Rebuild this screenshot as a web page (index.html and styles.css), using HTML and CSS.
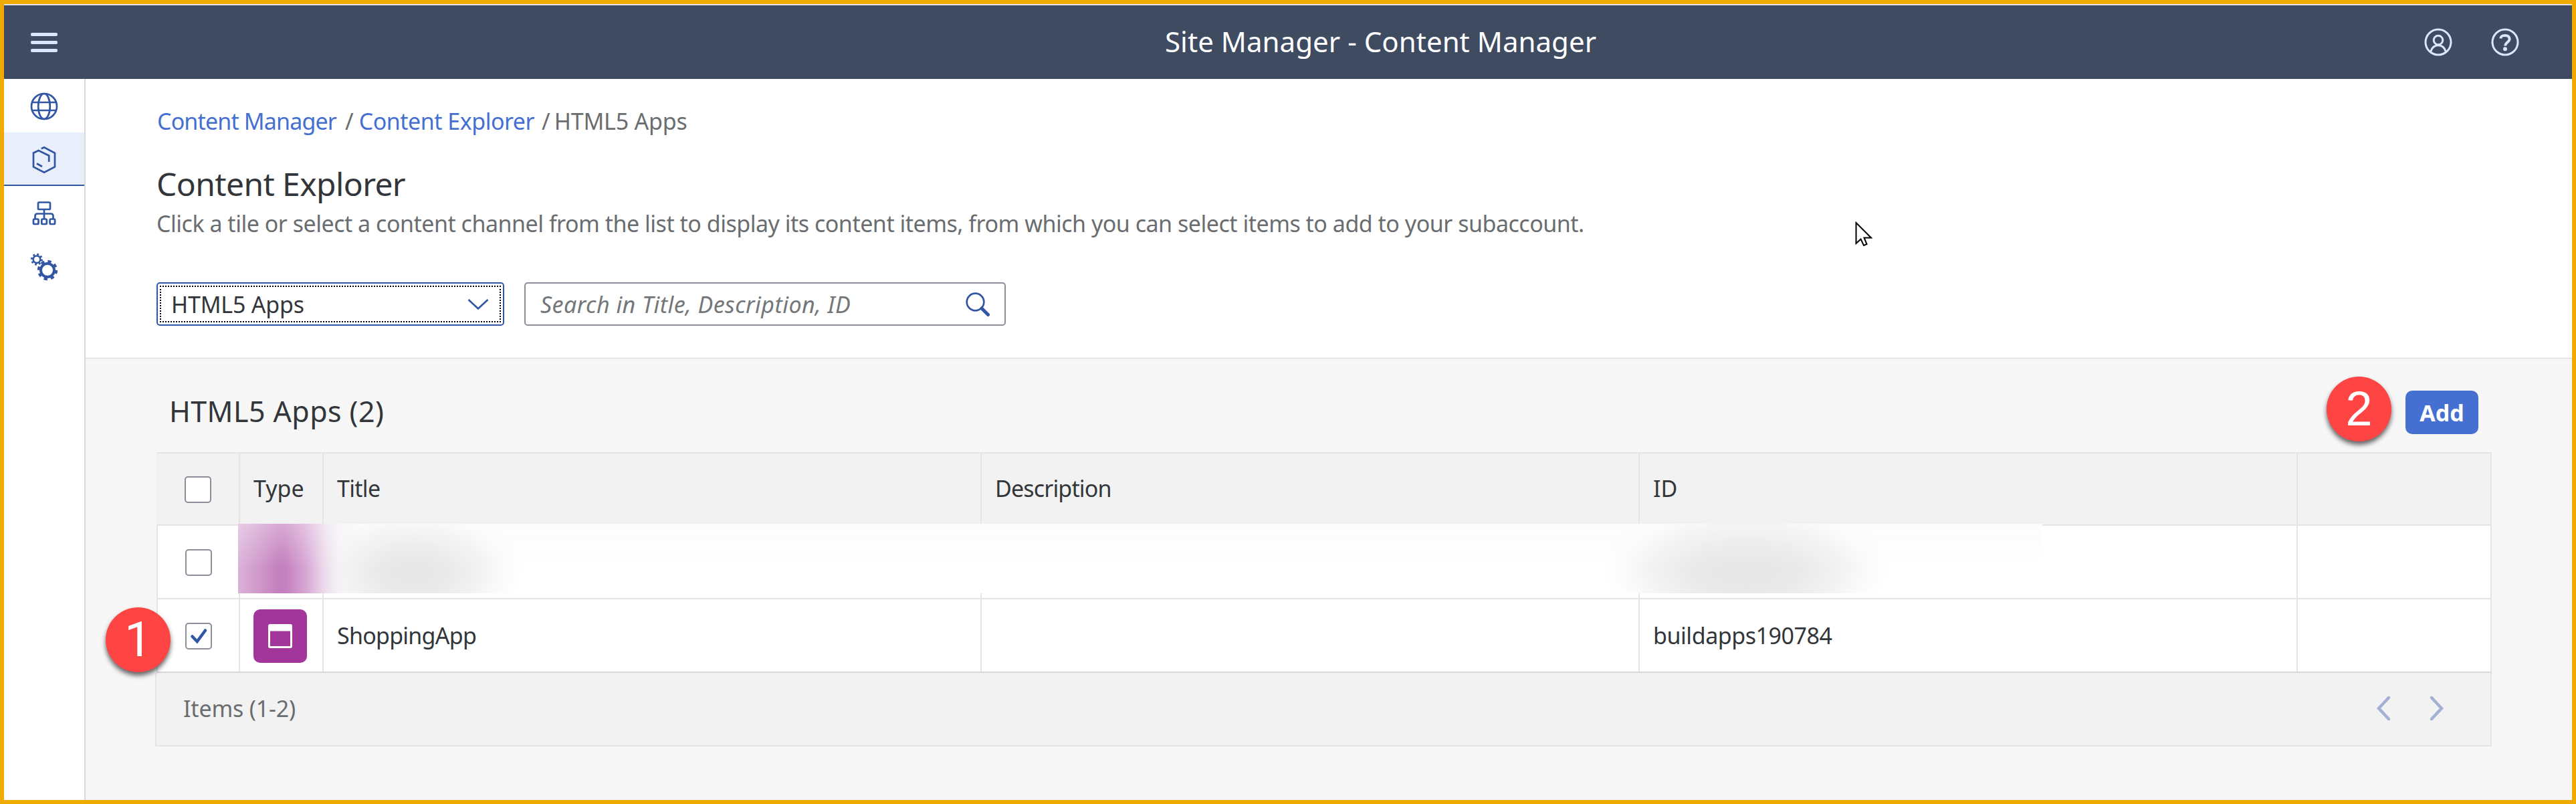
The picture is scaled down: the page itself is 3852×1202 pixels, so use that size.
FILE: index.html
```html
<!DOCTYPE html>
<html lang="en">
<head>
<meta charset="utf-8">
<title>Site Manager - Content Manager</title>
<link rel="stylesheet" href="styles.css">
</head>
<body>
<div class="app">
  <header class="shell">
    <button class="menu" aria-label="Menu"><i></i><i></i><i></i></button>
    <div class="shell-title"><span>Site Manager - Content Manager</span></div>
    <div class="shell-actions">
      <svg class="ic-shell" viewBox="0 0 42 42"><circle cx="21" cy="21" r="19"/><circle cx="21" cy="18" r="6.8"/><path d="M9.6 35.5C11.5 29 15 25.8 21 25.8s9.500 3.200 11.400 9.700"/></svg>
      <svg class="ic-shell" viewBox="0 0 42 42"><circle cx="21" cy="21" r="19"/><path class="q" d="M14.200 15.500C15 11 18 10.900 21 10.900c4 0 6.600 2 6.600 5.400 0 4.700-6.300 4.700-6.300 10.200"/><circle class="dot" cx="21" cy="31.200" r="3"/></svg>
    </div>
  </header>
  <div class="body">
    <nav class="side">
      <a class="item"><svg viewBox="0 0 42 42"><g class="s"><circle cx="21" cy="21" r="19"/><ellipse cx="21" cy="21" rx="8.800" ry="19"/><path d="M3 15h36M3 27h36"/></g></svg></a>
      <a class="item active"><svg viewBox="0 0 42 42"><g class="s"><path d="M16.800 4.300L21 2.300 37 10.700V31.500L21 39.800 5 31.500V10.700L12.600 7 28.200 14.700V24"/><path d="M10 26.500L18 31"/></g></svg></a>
      <a class="item"><svg viewBox="0 0 42 42"><g class="s"><rect x="12" y="4.500" width="18" height="10.500" rx="1.500"/><path d="M21 15V29M7.500 29V25q0-3.500 3.500-3.500H31q3.500 0 3.500 3.500V29"/><rect x="5" y="29.500" width="7.500" height="7.500" rx="1.500"/><rect x="17.300" y="29.500" width="7.500" height="7.500" rx="1.500"/><rect x="29.600" y="29.500" width="7.500" height="7.500" rx="1.500"/></g></svg></a>
      <a class="item"><svg viewBox="0 0 42 42"><g class="s"><circle cx="10" cy="9.800" r="5.300"/><circle class="teeth-s" cx="10" cy="9.800" r="7.300"/><circle class="ring" cx="26" cy="26" r="10"/><circle class="teeth" cx="26" cy="26" r="12.700"/></g></svg></a>
    </nav>
    <main class="main">
      <section class="top">
        <div class="crumbs"><a class="c1">Content Manager</a><span class="sep">/</span><a class="c2">Content Explorer</a><span class="sep sep2">/</span><span class="c3">HTML5 Apps</span></div>
        <h1>Content Explorer</h1>
        <p class="sub">Click a tile or select a content channel from the list to display its content items, from which you can select items to add to your subaccount.</p>
        <div class="controls">
          <div class="select"><div class="focus"><span>HTML5 Apps</span><svg viewBox="0 0 32 18"><path d="M1.500 2L16 15.500 30.500 2"/></svg></div></div>
          <div class="search"><span>Search in Title, Description, ID</span><svg viewBox="0 0 36 36"><circle cx="14.500" cy="14.500" r="12.800"/><path class="h" d="M24 24L33.500 33.500"/></svg></div>
        </div>
      </section>
      <section class="content">
        <div class="toolbar"><h2>HTML5 Apps (2)</h2><button class="add">Add<b class="badge two">2</b></button></div>
        <div class="table">
          <div class="row head"><div class="cell sel"><i class="cb"></i></div><div class="cell">Type</div><div class="cell"><span class="t-title">Title</span></div><div class="cell"><span class="t-desc">Description</span></div><div class="cell">ID</div><div class="cell"></div></div>
          <div class="row"><div class="cell sel"><i class="cb"></i></div><div class="cell"></div><div class="cell"></div><div class="cell"></div><div class="cell"></div><div class="cell"></div><div class="redacted"></div></div>
          <div class="row last"><div class="cell sel"><i class="cb"><svg viewBox="0 0 36 36"><path d="M8.500 18.500L15.800 26 28 9.500"/></svg></i><b class="badge one">1</b></div><div class="cell"><div class="tile"><svg viewBox="0 0 36 36"><path d="M3 0H33Q36 0 36 3V33Q36 36 33 36H3Q0 36 0 33V3Q0 0 3 0ZM3 10.500V33H33V10.500Z" fill-rule="evenodd"/></svg></div></div><div class="cell"><span class="t-app">ShoppingApp</span></div><div class="cell"></div><div class="cell"><span class="t-id">buildapps190784</span></div><div class="cell"></div></div>
        </div>
        <div class="foot"><span>Items (1-2)</span><div class="pager"><svg viewBox="0 0 20 36"><path d="M18 2L3 18 18 34"/></svg><svg viewBox="0 0 20 36"><path d="M2 2L17 18 2 34"/></svg></div></div>
      </section>
    </main>
  </div>
  <svg class="cursor" viewBox="0 0 26 38"><path d="M1.500 2V33L8.500 26.500 13 36 17.500 34 13.500 24.500H24Z"/></svg>
</div>
</body>
</html>
```
FILE: styles.css
```css
* { box-sizing: border-box; }
body { margin: 0; font-family: "Noto Sans", "Open Sans", sans-serif; font-size: 34px; line-height: 50px; color: #32363a; background: #fff; }
h1, h2, p { margin: 0; font-weight: 400; white-space: nowrap; }
button { border: 0; padding: 0; font: inherit; }
span, a { white-space: nowrap; }
.app { position: relative; width: 3852px; height: 1202px; border: 6px solid #f0ab00; display: flex; flex-direction: column; }

.shell { height: 112px; border-top: 2px solid #e5e5e5; background: #3f4b61; display: flex; align-items: center; color: #fff; padding: 0 79px 0 40px; }
.menu { width: 40px; display: flex; flex-direction: column; gap: 7px; background: none; }
.menu i { height: 5px; border-radius: 2px; background: #d9e6ff; }
.shell-title { flex: 1; padding: 0 0 3px 1656px; font-size: 42px; letter-spacing: 0.04px; }
.shell-actions { display: flex; gap: 58px; }
.ic-shell { width: 42px; height: 42px; fill: none; stroke: #d9e6ff; stroke-width: 3; }
.ic-shell .q { stroke-width: 4; }
.ic-shell .dot { fill: #d9e6ff; stroke: none; }

.body { flex: 1; display: flex; }
.side { width: 122px; border-right: 2px solid #d9d9d9; background: #fff; }
.item { height: 80px; padding-top: 3px; display: flex; align-items: center; justify-content: center; border-bottom: 2px solid transparent; }
.item.active { background: #e8effa; border-bottom-color: #3156a3; }
.item svg { width: 42px; height: 42px; }
.s { fill: none; stroke: #3156a3; stroke-width: 2.700; }
.s .teeth-s { stroke-width: 3.500; stroke-dasharray: 2.600 3.133; }
.s .ring { stroke-width: 4; }
.s .teeth { stroke-width: 5; stroke-dasharray: 5 4.975; }

.main { flex: 1; display: flex; flex-direction: column; }
.top { height: 418px; padding: 38px 0 0 106px; border-bottom: 1px solid #d9d9d9; background: #fff; }
.crumbs { height: 50px; padding-left: 1px; display: flex; color: #6a6d70; }
.crumbs a { color: #456fd1; }
.c1 { letter-spacing: -0.85px; }
.c2 { letter-spacing: -0.5px; }
.c3 { letter-spacing: -0.2px; }
.sep { margin: 0 8px 0 13px; }
.sep2 { margin: 0 6px 0 11px; }
h1 { margin-top: 39px; font-size: 48px; line-height: 60px; letter-spacing: -0.6px; }
.sub { margin-top: 4px; color: #6a6d70; letter-spacing: -0.49px; }
.controls { margin-top: 63px; display: flex; gap: 30px; }
.select { width: 520px; height: 65px; border: 2px solid #3156a3; border-radius: 5px; padding: 3px; }
.focus { height: 100%; border: 2px dotted #000; display: flex; align-items: center; justify-content: space-between; padding: 0 16px 0 15px; letter-spacing: -0.2px; }
.focus svg { width: 32px; height: 18px; fill: none; stroke: #3156a3; stroke-width: 2.700; }
.search { width: 720px; height: 65px; border: 2px solid #8a8f99; border-radius: 5px; display: flex; align-items: center; justify-content: space-between; padding: 0 22px; font-style: italic; letter-spacing: 0.45px; color: #74777a; }
.search svg { width: 36px; height: 36px; fill: none; stroke: #3156a3; stroke-width: 2.700; }
.search .h { stroke-width: 5; stroke-linecap: round; }

.content { flex: 1; background: #f7f7f7; padding: 48px 120px 0 104px; box-shadow: inset 0 4px 4px -2px #f1f1f1; }
.toolbar { height: 65px; margin-bottom: 27px; padding: 0 20px 0 21px; display: flex; align-items: center; justify-content: space-between; }
h2 { font-size: 43px; padding-bottom: 4px; letter-spacing: 0.4px; }
.add { position: relative; width: 109px; height: 65px; border-radius: 10px; background: #456fd1; color: #fff; font-weight: 700; }
.badge { position: absolute; width: 97px; height: 97px; border-radius: 50%; background: #ff4444; color: #fff; font: 400 72px/97px "Liberation Sans", sans-serif; text-align: center; box-shadow: 0 5px 7px rgba(0,0,0,.6); z-index: 2; }
.two { left: -118px; top: -21px; }
.one { left: -78px; top: 12px; font-family: Roboto, sans-serif; }

.table { margin-left: 2px; width: 3492px; }
.row { position: relative; height: 110px; display: grid; grid-template-columns: 125px 125px 984px 984px 984px 290px; background: #fff; border-bottom: 2px solid #e5e5e5; }
.head { background: #f2f2f2; border-top: 2px solid #e5e5e5; }
.last { border-bottom-color: #d9d9d9; }
.cell { position: relative; display: flex; align-items: center; padding-left: 20px; border-right: 2px solid #e5e5e5; }
.head .cell { padding-bottom: 2px; }
.cell.sel { justify-content: center; padding: 2px 0 0; border-left: 2px solid #e5e5e5; }
.head .cell.sel { padding: 2px 2px 0 0; border-left-color: #f2f2f2; }
.t-title { letter-spacing: -0.7px; }
.t-desc { letter-spacing: -0.85px; }
.t-app { letter-spacing: -0.75px; }
.t-id { letter-spacing: -0.45px; }
.cb { width: 40px; height: 40px; border: 2px solid #8a8f99; border-radius: 5px; background: #fff; }
.cb svg { display: block; width: 36px; height: 36px; fill: none; stroke: #3156a3; stroke-width: 4.500; stroke-linecap: round; }
.tile { width: 80px; height: 80px; margin-top: 2px; border-radius: 10px; background: #a3369b; display: flex; align-items: center; justify-content: center; }
.tile svg { width: 36px; height: 36px; fill: #fff; }
.redacted { position: absolute; left: 122px; top: -3px; width: 2698px; height: 104px; background:
  linear-gradient(#fff5, #fff0 65%),
  linear-gradient(90deg, #dab2d8, #cf98ca 32px, #c47fbe 60px, #c581bf 72px, #d6a4d3 100px, #ecdcec 130px, #f5f2f5 150px, #f5f5f500 185px),
  radial-gradient(ellipse 165px 105px at 262px 68px, #e6e6e6, #e9e9e9 30%, #f1f1f1 58%, #fafafa 80%, #fff0),
  radial-gradient(ellipse 215px 110px at 2255px 66px, #e6e6e6, #e9e9e9 35%, #f1f1f1 62%, #fafafa 82%, #fff0),
  linear-gradient(#fbfbfb, #fff 60%); }
.foot { width: 3494px; height: 110px; background: #f2f2f2; border: solid #e5e5e5; border-width: 0 2px 2px; display: flex; align-items: center; justify-content: space-between; padding: 0 70px 2px 40px; color: #6a6d70; letter-spacing: -0.2px; }
.pager { display: flex; gap: 60px; }
.pager svg { width: 20px; height: 36px; fill: none; stroke: #a3b2d4; stroke-width: 4.500; stroke-linecap: round; }
.cursor { position: absolute; left: 2768px; top: 325px; width: 26px; height: 38px; fill: #fff; stroke: #000; stroke-width: 2; }
```
